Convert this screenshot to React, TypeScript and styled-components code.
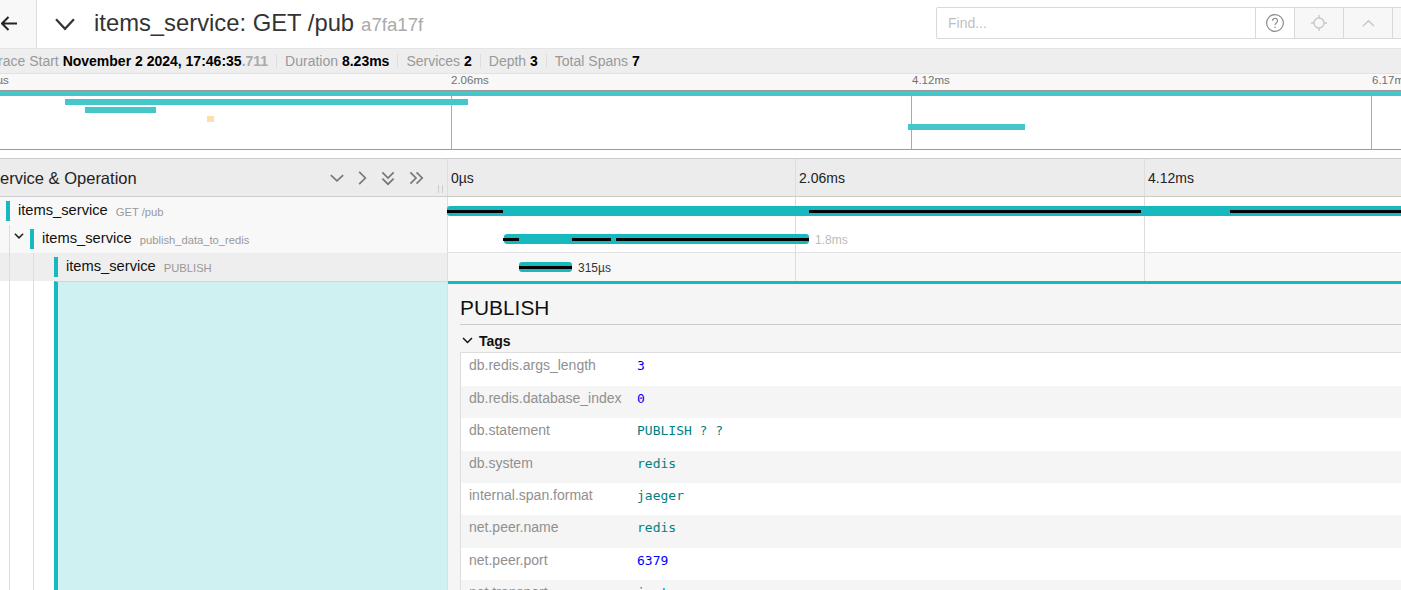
import React from 'react';
import styled, { createGlobalStyle } from 'styled-components';

const GlobalStyle = createGlobalStyle`
    html, body {
        margin: 0;
        height: 590px;
        overflow: hidden;
        background: #fff;
        font-family: "Liberation Sans", Arial, sans-serif;
        color: #000;
    }
    * { box-sizing: border-box; }
`

const Page = styled.div`
    width: 1401px;
    height: 590px;
    overflow: hidden;
    display: flex;
    flex-direction: column;
`

const TitleBar = styled.header`
    height: 49px;
    flex: none;
    display: flex;
    align-items: center;
    padding-bottom: 2px;
    border-bottom: 1px solid #e4e4e4;
`

const BackButton = styled.div`
    width: 37px;
    height: 48px;
    margin-bottom: -2px;
    padding: 0 0 2px 1px;
    flex: none;
    display: flex;
    align-items: center;
    justify-content: flex-start;
    background: #f8f8f8;
    border-right: 1px solid #ddd;
    color: #222;
`

const Collapse = styled.div`
    display: flex;
    margin: 2px 18px 0 17px;
    color: #333;
`

const TraceName = styled.h1`
    margin: 0;
    font-size: 23.8px;
    font-weight: 400;
    color: #333;
`

const TraceId = styled.small`
    margin-left: 7px;
    font-size: 18.6px;
    color: #aaa;
`

const SearchBox = styled.div`
    margin-left: auto;
    margin-right: -20px;
    display: flex;
    height: 32px;
    width: 485px;
    flex: none;
    border: 1px solid #d9d9d9;
    border-radius: 2px;
`

const SearchInput = styled.div`
    width: 318px;
    flex: none;
    padding-left: 11px;
    font-size: 14px;
    line-height: 30px;
    color: #bfbfbf;
`

const SearchButton = styled.div<{ $disabled?: boolean; $wide?: boolean }>`
    width: ${(p) => (p.$wide ? '49px' : '39px')};
    flex: none;
    display: flex;
    align-items: center;
    justify-content: center;
    border-left: 1px solid #d9d9d9;
    background: ${(p) => (p.$disabled ? '#f7f7f7' : '#fff')};
    color: ${(p) => (p.$disabled ? '#c8c8c8' : '#8c8c8c')};
`

const InfoBar = styled.div`
    height: 25px;
    flex: none;
    display: flex;
    align-items: center;
    background: #eee;
    border-bottom: 1px solid #e2e2e2;
    font-size: 14px;
    color: #999;
    padding-bottom: 1px;
`

const InfoItem = styled.div<{ $first?: boolean }>`
    padding: 0 8px;
    margin-left: ${(p) => (p.$first ? '-18px' : '0')};
    border-left: ${(p) => (p.$first ? 'none' : '1px solid #ddd')};
    line-height: 14px;

    strong { color: #000; }
    span { color: #aaa; font-weight: 700; }
`

const MiniTicks = styled.div`
    height: 16px;
    flex: none;
    position: relative;
    background: #f8f8f8;
    font-size: 11.5px;
    color: #717171;
`

const MiniTick = styled.span<{ $left: number }>`
    position: absolute;
    top: 0;
    left: ${(p) => p.$left}px;
    line-height: 12px;
`

const MiniMap = styled.div`
    height: 60px;
    flex: none;
    position: relative;
    background: #fff;
    border-top: 1px solid #999;
    border-bottom: 1px solid #999;
`

const MiniLine = styled.div<{ $left: number }>`
    position: absolute;
    top: 0;
    bottom: 0;
    width: 1px;
    left: ${(p) => p.$left}px;
    background: #aaa;
`

const MiniBar = styled.div<{ $left: number; $top: number; $width: number; $height?: number; $color?: string }>`
    position: absolute;
    height: ${(p) => p.$height || 6}px;
    left: ${(p) => p.$left}px;
    top: ${(p) => p.$top}px;
    width: ${(p) => p.$width}px;
    background: ${(p) => p.$color || '#45c6cb'};
`

const Spacer = styled.div`
    height: 8px;
    flex: none;
`

const Columns = styled.div`
    display: grid;
    grid-template-columns: 448px 1fr;
    flex: none;
`

const HeaderRow = styled(Columns)`
    height: 39px;
    background: #ececec;
    border-top: 1px solid #ccc;
    border-bottom: 1px solid #ccc;
`

const HeaderLeft = styled.div`
    position: relative;
    display: flex;
    align-items: center;
    border-right: 1px solid #ddd;
    font-size: 16.5px;
    color: #222;
`

const HeaderTitle = styled.div`
    margin-left: -11px;
    padding-top: 2px;
`

const HeaderIcons = styled.div`
    margin-left: auto;
    margin-right: 22px;
    display: flex;
    color: #777;
`

const HeaderIcon = styled.div<{ $gap: number }>`
    display: flex;
    margin-left: ${(p) => p.$gap}px;
`

const Grip = styled.div`
    position: absolute;
    right: 4px;
    bottom: 3px;
    width: 5px;
    height: 8px;
    border-left: 1px solid #ccc;
    border-right: 1px solid #ccc;
`

const Timeline = styled.div`
    position: relative;
    height: 100%;
    margin-left: -1px;
`

const Tick = styled.span<{ $left: number }>`
    position: absolute;
    top: 0;
    bottom: 0;
    left: ${(p) => p.$left}px;
    display: flex;
    align-items: center;
    padding-left: 3px;
    border-left: 1px solid #ddd;
    font-size: 14px;
    color: #222;
`

const GridLine = styled.div<{ $left: number }>`
    position: absolute;
    top: 0;
    bottom: 0;
    width: 1px;
    left: ${(p) => p.$left}px;
    background: #ddd;
`

const SpanRow = styled(Columns)<{ $active?: boolean }>`
    height: 28px;
    background: ${(p) => (p.$active ? '#f8f8f8' : '#fff')};
`

const SpanName = styled.div<{ $active?: boolean }>`
    position: relative;
    display: flex;
    align-items: center;
    height: 28px;
    background: ${(p) => (p.$active ? '#eee' : '#f8f8f8')};
    border-right: 1px solid #ddd;
`

const Guide = styled.div<{ $left: number }>`
    position: absolute;
    top: 0;
    bottom: 0;
    width: 1px;
    left: ${(p) => p.$left}px;
    background: #ddd;
`

const Toggle = styled.div`
    position: absolute;
    left: 13px;
    top: 5px;
    display: flex;
    color: #222;
`

const ServiceMark = styled.div<{ $indent: number }>`
    width: 4px;
    height: 20px;
    margin-left: ${(p) => p.$indent}px;
    background: #17b8be;
    flex: none;
`

const ServiceName = styled.span`
    margin: -2px 0 0 8px;
    font-size: 14.7px;
    color: #111;
`

const Operation = styled.span`
    margin-left: 8px;
    font-size: 11.2px;
    color: #999;
    padding-top: 1px;
`

const RowLine = styled.div`
    position: absolute;
    left: 0;
    right: 0;
    bottom: 0;
    height: 1px;
    background: #e0e0e0;
`

const Bar = styled.div<{ $left: number; $width: number }>`
    position: absolute;
    top: 9px;
    height: 10px;
    left: ${(p) => p.$left}px;
    width: ${(p) => p.$width}px;
    background: #17b8be;
    border-radius: 3px;
`

const Critical = styled.div<{ $left: number; $width: number }>`
    position: absolute;
    top: 13px;
    height: 3px;
    left: ${(p) => p.$left}px;
    width: ${(p) => p.$width}px;
    background: #000;
`

const BarLabel = styled.span<{ $left: number; $muted?: boolean }>`
    position: absolute;
    top: 8px;
    left: ${(p) => p.$left}px;
    font-size: 12px;
    line-height: 15px;
    color: ${(p) => (p.$muted ? '#bbb' : '#333')};
`

const Detail = styled(Columns)`
    flex: 1;
    min-height: 0;
    overflow: hidden;
`

const DetailLeft = styled.div`
    position: relative;
    display: flex;
    border-right: 1px solid #ddd;
`

const DetailFill = styled.div`
    width: 393px;
    margin-left: 54px;
    background: #cff1f2;
    border-left: 4px solid #17b8be;
    border-top: 1px solid #c4dcdd;
`

const DetailRight = styled.div`
    margin-left: -1px;
    background: #f5f5f5;
    border-top: 3px solid #17b8be;
    border-left: 1px solid #ddd;
    padding: 0 0 0 12px;
    overflow: hidden;
`

const DetailTitle = styled.h2`
    margin: 0;
    height: 41px;
    padding-top: 12px;
    font-size: 20.9px;
    line-height: 24px;
    font-weight: 400;
    color: #111;
    border-bottom: 1px solid #ccc;
`

const TagsHeader = styled.div`
    display: flex;
    align-items: center;
    gap: 5px;
    height: 27px;
    font-size: 14px;
    font-weight: 700;
    color: #111;
    padding: 4px 0 0 1px;
`

const TagsTable = styled.div`
    padding-top: 0.4px;
    background: #fff;
    border: 1px solid #ddd;
    border-right: none;
`

const TagRow = styled.div`
    display: grid;
    grid-template-columns: 168px 1fr;
    height: 32.4px;
    padding: 4px 0 0 8px;
    font-size: 14px;
    color: #909090;
    &:nth-child(even) { background: #f5f5f5; }
`

const TagValue = styled.span<{ $kind: 'number' | 'string' }>`
    font-family: "DejaVu Sans Mono", monospace;
    font-size: 13px;
    color: ${(p) => (p.$kind === 'number' ? '#00f' : '#008080')};
    line-height: 17px;
`

const Chevron: React.FC<{ size: number; d: string; width?: number }> = ({ size, d, width = 1.5 }) => (
    <svg width={size} height={size} viewBox="0 0 16 16" fill="none" stroke="currentColor" strokeWidth={width}>
        <path d={d} />
    </svg>
);

const tags: { key: string; value: string; kind: 'number' | 'string' }[] = [
    { key: 'db.redis.args_length', value: '3', kind: 'number' },
    { key: 'db.redis.database_index', value: '0', kind: 'number' },
    { key: 'db.statement', value: 'PUBLISH ? ?', kind: 'string' },
    { key: 'db.system', value: 'redis', kind: 'string' },
    { key: 'internal.span.format', value: 'jaeger', kind: 'string' },
    { key: 'net.peer.name', value: 'redis', kind: 'string' },
    { key: 'net.peer.port', value: '6379', kind: 'number' },
    { key: 'net.transport', value: 'ip_tcp', kind: 'string' },
];

const grid = [348, 697];

const App: React.FC = () => {
    return <Page>
        <GlobalStyle />
        <TitleBar>
            <BackButton>
                <svg width="17" height="15" viewBox="0 0 17 15" fill="none" stroke="currentColor" strokeWidth="2">
                    <path d="M1 7.5h15M7.5 1L1 7.5 7.5 14" />
                </svg>
            </BackButton>
            <Collapse><Chevron size={22} d="M1.5 4.5L8 11.5l6.5-7" width={1.6} /></Collapse>
            <TraceName>items_service: GET /pub<TraceId>a7fa17f</TraceId></TraceName>
            <SearchBox>
                <SearchInput>Find...</SearchInput>
                <SearchButton>
                    <svg width="20" height="20" viewBox="0 0 20 20" fill="none" stroke="currentColor" strokeWidth="1.2">
                        <circle cx="10" cy="10" r="8.4" />
                        <path d="M7.5 7.8a2.5 2.5 0 1 1 3.8 2.1c-.9.6-1.3 1-1.3 2.2M10 13.6v1.4" />
                    </svg>
                </SearchButton>
                <SearchButton $disabled $wide>
                    <svg width="18" height="18" viewBox="0 0 18 18" fill="none" stroke="currentColor" strokeWidth="1.4">
                        <circle cx="9" cy="9" r="5" />
                        <path d="M9 1v3M9 14v3M1 9h3M14 9h3" />
                    </svg>
                </SearchButton>
                <SearchButton $disabled $wide><Chevron size={15} d="M2 11l6-6 6 6" /></SearchButton>
                <SearchButton $disabled $wide />
            </SearchBox>
        </TitleBar>
        <InfoBar>
            <InfoItem $first>Trace Start <strong>November 2 2024, 17:46:35</strong><span>.711</span></InfoItem>
            <InfoItem>Duration <strong>8.23ms</strong></InfoItem>
            <InfoItem>Services <strong>2</strong></InfoItem>
            <InfoItem>Depth <strong>3</strong></InfoItem>
            <InfoItem>Total Spans <strong>7</strong></InfoItem>
        </InfoBar>
        <MiniTicks>
            <MiniTick $left={-10}>0µs</MiniTick>
            <MiniTick $left={451}>2.06ms</MiniTick>
            <MiniTick $left={912}>4.12ms</MiniTick>
            <MiniTick $left={1372}>6.17ms</MiniTick>
        </MiniTicks>
        <MiniMap>
            <MiniLine $left={451} />
            <MiniLine $left={911} />
            <MiniLine $left={1371} />
            <MiniBar $left={0} $top={0} $width={1401} $height={5} />
            <MiniBar $left={65} $top={8} $width={403} />
            <MiniBar $left={85} $top={16} $width={71} />
            <MiniBar $left={207} $top={25} $width={7} $color="#fbe0ac" />
            <MiniBar $left={908} $top={33} $width={117} />
        </MiniMap>
        <Spacer />
        <HeaderRow>
            <HeaderLeft>
                <HeaderTitle>Service &amp; Operation</HeaderTitle>
                <HeaderIcons>
                    <HeaderIcon $gap={0}><Chevron size={18} d="M2.5 5.5L8 10.5l5.5-5" /></HeaderIcon>
                    <HeaderIcon $gap={7}><Chevron size={18} d="M5.5 2.5L11 8l-5.5 5.5" /></HeaderIcon>
                    <HeaderIcon $gap={8}><Chevron size={18} d="M3 3l5 5 5-5M3 8.5l5 5 5-5" /></HeaderIcon>
                    <HeaderIcon $gap={10}><Chevron size={18} d="M3 3l5 5-5 5M8.5 3l5 5-5 5" /></HeaderIcon>
                </HeaderIcons>
                <Grip />
            </HeaderLeft>
            <Timeline>
                <Tick $left={0}>0µs</Tick>
                <Tick $left={348}>2.06ms</Tick>
                <Tick $left={697}>4.12ms</Tick>
            </Timeline>
        </HeaderRow>
        <SpanRow>
            <SpanName>
                <ServiceMark $indent={6} />
                <ServiceName>items_service</ServiceName>
                <Operation>GET /pub</Operation>
            </SpanName>
            <Timeline>
                {grid.map((x) => <GridLine key={x} $left={x} />)}
                <Bar $left={0} $width={964} />
                <Critical $left={0} $width={56} />
                <Critical $left={362} $width={332} />
                <Critical $left={783} $width={171} />
            </Timeline>
        </SpanRow>
        <SpanRow>
            <SpanName>
                <Guide $left={9} />
                <Toggle><Chevron size={12} d="M2.5 5L8 10.5 13.5 5" width={2} /></Toggle>
                <ServiceMark $indent={30} />
                <ServiceName>items_service</ServiceName>
                <Operation>publish_data_to_redis</Operation>
            </SpanName>
            <Timeline>
                {grid.map((x) => <GridLine key={x} $left={x} />)}
                <Bar $left={57} $width={305} />
                <Critical $left={56} $width={16} />
                <Critical $left={125} $width={39} />
                <Critical $left={169} $width={193} />
                <BarLabel $left={368} $muted>1.8ms</BarLabel>
                <RowLine />
            </Timeline>
        </SpanRow>
        <SpanRow $active>
            <SpanName $active>
                <Guide $left={9} />
                <Guide $left={33} />
                <ServiceMark $indent={54} />
                <ServiceName>items_service</ServiceName>
                <Operation>PUBLISH</Operation>
            </SpanName>
            <Timeline>
                {grid.map((x) => <GridLine key={x} $left={x} />)}
                <Bar $left={72} $width={53} />
                <Critical $left={72} $width={53} />
                <BarLabel $left={131}>315µs</BarLabel>
            </Timeline>
        </SpanRow>
        <Detail>
            <DetailLeft>
                <Guide $left={9} />
                <Guide $left={33} />
                <DetailFill />
            </DetailLeft>
            <DetailRight>
                <DetailTitle>PUBLISH</DetailTitle>
                <TagsHeader>
                    <Chevron size={13} d="M2.5 5L8 10.5 13.5 5" width={1.8} />
                    Tags
                </TagsHeader>
                <TagsTable>
                    {tags.map((t) => <TagRow key={t.key}>
                        <span>{t.key}</span>
                        <TagValue $kind={t.kind}>{t.value}</TagValue>
                    </TagRow>)}
                </TagsTable>
            </DetailRight>
        </Detail>
    </Page>;
}

export default App;
